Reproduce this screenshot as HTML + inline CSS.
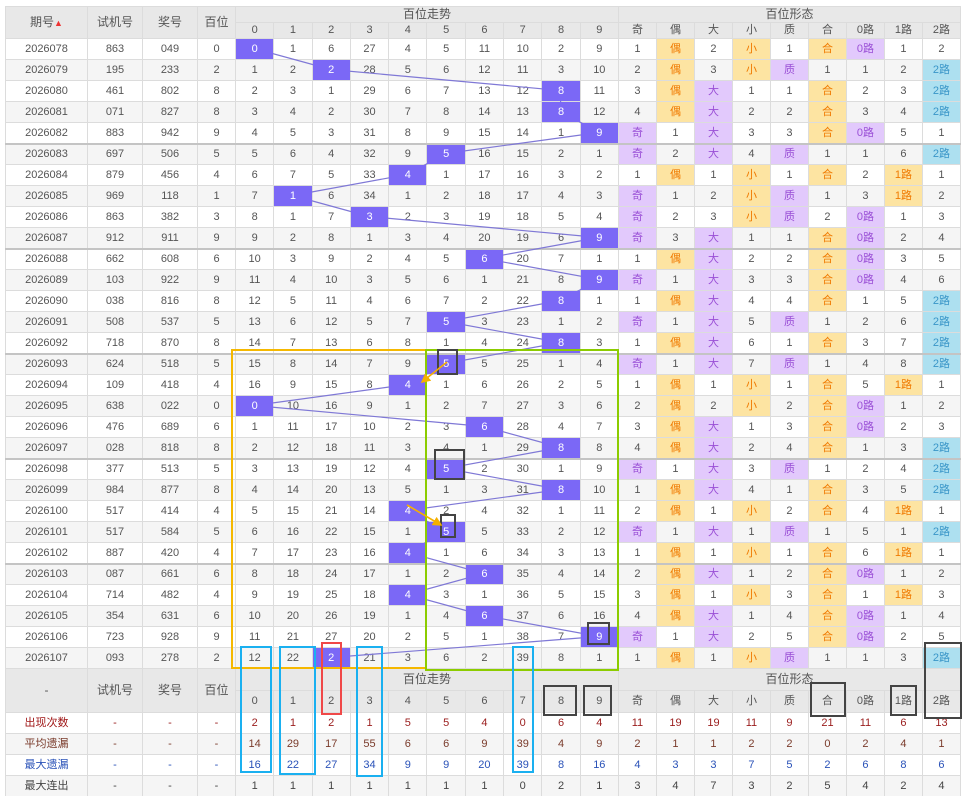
<!DOCTYPE html>
<html><head><meta charset="utf-8">
<style>
html,body{margin:0;padding:0;background:#fff;width:963px;height:796px;overflow:hidden;position:relative}
table{position:absolute;left:5px;top:6px;border-collapse:collapse;table-layout:fixed;font-family:"Liberation Sans","Noto Sans CJK SC",sans-serif;font-size:11px;color:#555}
td,th{border:1px solid #dcdcdc;text-align:center;padding:0;height:20px;line-height:20px;overflow:hidden;white-space:nowrap;font-weight:normal}
thead th{background:#e8e8e8;color:#555;font-size:12px}
thead tr.r1 th{height:15px;line-height:15px}
thead tr.r2 th{height:15px;line-height:15px;font-size:11px}
tbody tr:nth-child(even) td{background:#f5f5f5}
tbody tr:nth-child(odd) td{background:#fff}
tr.g td{border-top:2px solid #c4c4c4;height:19px;line-height:19px}
td.h{background:#7b68f6 !important;color:#fff;position:relative;z-index:2}
td.p{background:#e2c9fc !important;color:#9a4fd6}
td.y{background:#fde4a2 !important;color:#f07a00}
td.b{background:#ade0f0 !important;color:#3a96c8}
tfoot th{background:#e8e8e8;color:#555;font-size:12px}
tfoot tr.f1 th{height:21px;line-height:21px;border-top:1px solid #c4c4c4}
tfoot tr.f2 th{height:21px;line-height:21px;font-size:11px}
tfoot td{background:#fff}
tfoot tr.s2 td,tfoot tr.s4 td{background:#f5f5f5}
tr.s1 td{color:#9a1c1c}
tr.s2 td{color:#7a3b2b}
tr.s3 td{color:#2a52b8}
tr.s4 td{color:#444}
tr.s1 td:first-child{color:#a01818}
svg{position:absolute;left:0;top:0;pointer-events:none}
</style></head><body>
<svg width="963" height="796" style="z-index:1">
<polyline fill="none" stroke="#7f78d6" stroke-width="1.2" points="254,48.5 330.8,69.5 560.6,90.5 560.6,111.5 599,132.5 445.7,153.5 407.4,174.5 292.5,195.5 369,216.5 599,237.5 484,258.5 599,279.5 560.6,300.5 445.7,321.5 560.6,342.5 445.7,363.5 407.4,384.5 254,405.5 484,426.5 560.6,447.5 445.7,468.5 560.6,489.5 407.4,510.5 445.7,531.5 407.4,552.5 484,573.5 407.4,594.5 484,615.5 599,636.5 330.8,657.5"/>
</svg>
<table>
<colgroup><col style="width:82px"><col style="width:55px"><col style="width:55px"><col style="width:38px">
<col style="width:38.3px"><col style="width:38.3px"><col style="width:38.3px"><col style="width:38.3px"><col style="width:38.3px"><col style="width:38.3px"><col style="width:38.3px"><col style="width:38.3px"><col style="width:38.3px"><col style="width:38.3px">
<col style="width:38px"><col style="width:38px"><col style="width:38px"><col style="width:38px"><col style="width:38px"><col style="width:38px"><col style="width:38px"><col style="width:38px"><col style="width:38px"></colgroup>
<thead>
<tr class="r1"><th rowspan="2">期号<span style="color:#e33;font-size:9px">▲</span></th><th rowspan="2">试机号</th><th rowspan="2">奖号</th><th rowspan="2">百位</th><th colspan="10">百位走势</th><th colspan="9">百位形态</th></tr>
<tr class="r2"><th>0</th><th>1</th><th>2</th><th>3</th><th>4</th><th>5</th><th>6</th><th>7</th><th>8</th><th>9</th><th>奇</th><th>偶</th><th>大</th><th>小</th><th>质</th><th>合</th><th>0路</th><th>1路</th><th>2路</th></tr>
</thead>
<tbody>
<tr><td>2026078</td><td>863</td><td>049</td><td>0</td><td class="h">0</td><td>1</td><td>6</td><td>27</td><td>4</td><td>5</td><td>11</td><td>10</td><td>2</td><td>9</td><td>1</td><td class="y">偶</td><td>2</td><td class="y">小</td><td>1</td><td class="y">合</td><td class="p">0路</td><td>1</td><td>2</td></tr>
<tr><td>2026079</td><td>195</td><td>233</td><td>2</td><td>1</td><td>2</td><td class="h">2</td><td>28</td><td>5</td><td>6</td><td>12</td><td>11</td><td>3</td><td>10</td><td>2</td><td class="y">偶</td><td>3</td><td class="y">小</td><td class="p">质</td><td>1</td><td>1</td><td>2</td><td class="b">2路</td></tr>
<tr><td>2026080</td><td>461</td><td>802</td><td>8</td><td>2</td><td>3</td><td>1</td><td>29</td><td>6</td><td>7</td><td>13</td><td>12</td><td class="h">8</td><td>11</td><td>3</td><td class="y">偶</td><td class="p">大</td><td>1</td><td>1</td><td class="y">合</td><td>2</td><td>3</td><td class="b">2路</td></tr>
<tr><td>2026081</td><td>071</td><td>827</td><td>8</td><td>3</td><td>4</td><td>2</td><td>30</td><td>7</td><td>8</td><td>14</td><td>13</td><td class="h">8</td><td>12</td><td>4</td><td class="y">偶</td><td class="p">大</td><td>2</td><td>2</td><td class="y">合</td><td>3</td><td>4</td><td class="b">2路</td></tr>
<tr><td>2026082</td><td>883</td><td>942</td><td>9</td><td>4</td><td>5</td><td>3</td><td>31</td><td>8</td><td>9</td><td>15</td><td>14</td><td>1</td><td class="h">9</td><td class="p">奇</td><td>1</td><td class="p">大</td><td>3</td><td>3</td><td class="y">合</td><td class="p">0路</td><td>5</td><td>1</td></tr>
<tr class="g"><td>2026083</td><td>697</td><td>506</td><td>5</td><td>5</td><td>6</td><td>4</td><td>32</td><td>9</td><td class="h">5</td><td>16</td><td>15</td><td>2</td><td>1</td><td class="p">奇</td><td>2</td><td class="p">大</td><td>4</td><td class="p">质</td><td>1</td><td>1</td><td>6</td><td class="b">2路</td></tr>
<tr><td>2026084</td><td>879</td><td>456</td><td>4</td><td>6</td><td>7</td><td>5</td><td>33</td><td class="h">4</td><td>1</td><td>17</td><td>16</td><td>3</td><td>2</td><td>1</td><td class="y">偶</td><td>1</td><td class="y">小</td><td>1</td><td class="y">合</td><td>2</td><td class="y">1路</td><td>1</td></tr>
<tr><td>2026085</td><td>969</td><td>118</td><td>1</td><td>7</td><td class="h">1</td><td>6</td><td>34</td><td>1</td><td>2</td><td>18</td><td>17</td><td>4</td><td>3</td><td class="p">奇</td><td>1</td><td>2</td><td class="y">小</td><td class="p">质</td><td>1</td><td>3</td><td class="y">1路</td><td>2</td></tr>
<tr><td>2026086</td><td>863</td><td>382</td><td>3</td><td>8</td><td>1</td><td>7</td><td class="h">3</td><td>2</td><td>3</td><td>19</td><td>18</td><td>5</td><td>4</td><td class="p">奇</td><td>2</td><td>3</td><td class="y">小</td><td class="p">质</td><td>2</td><td class="p">0路</td><td>1</td><td>3</td></tr>
<tr><td>2026087</td><td>912</td><td>911</td><td>9</td><td>9</td><td>2</td><td>8</td><td>1</td><td>3</td><td>4</td><td>20</td><td>19</td><td>6</td><td class="h">9</td><td class="p">奇</td><td>3</td><td class="p">大</td><td>1</td><td>1</td><td class="y">合</td><td class="p">0路</td><td>2</td><td>4</td></tr>
<tr class="g"><td>2026088</td><td>662</td><td>608</td><td>6</td><td>10</td><td>3</td><td>9</td><td>2</td><td>4</td><td>5</td><td class="h">6</td><td>20</td><td>7</td><td>1</td><td>1</td><td class="y">偶</td><td class="p">大</td><td>2</td><td>2</td><td class="y">合</td><td class="p">0路</td><td>3</td><td>5</td></tr>
<tr><td>2026089</td><td>103</td><td>922</td><td>9</td><td>11</td><td>4</td><td>10</td><td>3</td><td>5</td><td>6</td><td>1</td><td>21</td><td>8</td><td class="h">9</td><td class="p">奇</td><td>1</td><td class="p">大</td><td>3</td><td>3</td><td class="y">合</td><td class="p">0路</td><td>4</td><td>6</td></tr>
<tr><td>2026090</td><td>038</td><td>816</td><td>8</td><td>12</td><td>5</td><td>11</td><td>4</td><td>6</td><td>7</td><td>2</td><td>22</td><td class="h">8</td><td>1</td><td>1</td><td class="y">偶</td><td class="p">大</td><td>4</td><td>4</td><td class="y">合</td><td>1</td><td>5</td><td class="b">2路</td></tr>
<tr><td>2026091</td><td>508</td><td>537</td><td>5</td><td>13</td><td>6</td><td>12</td><td>5</td><td>7</td><td class="h">5</td><td>3</td><td>23</td><td>1</td><td>2</td><td class="p">奇</td><td>1</td><td class="p">大</td><td>5</td><td class="p">质</td><td>1</td><td>2</td><td>6</td><td class="b">2路</td></tr>
<tr><td>2026092</td><td>718</td><td>870</td><td>8</td><td>14</td><td>7</td><td>13</td><td>6</td><td>8</td><td>1</td><td>4</td><td>24</td><td class="h">8</td><td>3</td><td>1</td><td class="y">偶</td><td class="p">大</td><td>6</td><td>1</td><td class="y">合</td><td>3</td><td>7</td><td class="b">2路</td></tr>
<tr class="g"><td>2026093</td><td>624</td><td>518</td><td>5</td><td>15</td><td>8</td><td>14</td><td>7</td><td>9</td><td class="h">5</td><td>5</td><td>25</td><td>1</td><td>4</td><td class="p">奇</td><td>1</td><td class="p">大</td><td>7</td><td class="p">质</td><td>1</td><td>4</td><td>8</td><td class="b">2路</td></tr>
<tr><td>2026094</td><td>109</td><td>418</td><td>4</td><td>16</td><td>9</td><td>15</td><td>8</td><td class="h">4</td><td>1</td><td>6</td><td>26</td><td>2</td><td>5</td><td>1</td><td class="y">偶</td><td>1</td><td class="y">小</td><td>1</td><td class="y">合</td><td>5</td><td class="y">1路</td><td>1</td></tr>
<tr><td>2026095</td><td>638</td><td>022</td><td>0</td><td class="h">0</td><td>10</td><td>16</td><td>9</td><td>1</td><td>2</td><td>7</td><td>27</td><td>3</td><td>6</td><td>2</td><td class="y">偶</td><td>2</td><td class="y">小</td><td>2</td><td class="y">合</td><td class="p">0路</td><td>1</td><td>2</td></tr>
<tr><td>2026096</td><td>476</td><td>689</td><td>6</td><td>1</td><td>11</td><td>17</td><td>10</td><td>2</td><td>3</td><td class="h">6</td><td>28</td><td>4</td><td>7</td><td>3</td><td class="y">偶</td><td class="p">大</td><td>1</td><td>3</td><td class="y">合</td><td class="p">0路</td><td>2</td><td>3</td></tr>
<tr><td>2026097</td><td>028</td><td>818</td><td>8</td><td>2</td><td>12</td><td>18</td><td>11</td><td>3</td><td>4</td><td>1</td><td>29</td><td class="h">8</td><td>8</td><td>4</td><td class="y">偶</td><td class="p">大</td><td>2</td><td>4</td><td class="y">合</td><td>1</td><td>3</td><td class="b">2路</td></tr>
<tr class="g"><td>2026098</td><td>377</td><td>513</td><td>5</td><td>3</td><td>13</td><td>19</td><td>12</td><td>4</td><td class="h">5</td><td>2</td><td>30</td><td>1</td><td>9</td><td class="p">奇</td><td>1</td><td class="p">大</td><td>3</td><td class="p">质</td><td>1</td><td>2</td><td>4</td><td class="b">2路</td></tr>
<tr><td>2026099</td><td>984</td><td>877</td><td>8</td><td>4</td><td>14</td><td>20</td><td>13</td><td>5</td><td>1</td><td>3</td><td>31</td><td class="h">8</td><td>10</td><td>1</td><td class="y">偶</td><td class="p">大</td><td>4</td><td>1</td><td class="y">合</td><td>3</td><td>5</td><td class="b">2路</td></tr>
<tr><td>2026100</td><td>517</td><td>414</td><td>4</td><td>5</td><td>15</td><td>21</td><td>14</td><td class="h">4</td><td>2</td><td>4</td><td>32</td><td>1</td><td>11</td><td>2</td><td class="y">偶</td><td>1</td><td class="y">小</td><td>2</td><td class="y">合</td><td>4</td><td class="y">1路</td><td>1</td></tr>
<tr><td>2026101</td><td>517</td><td>584</td><td>5</td><td>6</td><td>16</td><td>22</td><td>15</td><td>1</td><td class="h">5</td><td>5</td><td>33</td><td>2</td><td>12</td><td class="p">奇</td><td>1</td><td class="p">大</td><td>1</td><td class="p">质</td><td>1</td><td>5</td><td>1</td><td class="b">2路</td></tr>
<tr><td>2026102</td><td>887</td><td>420</td><td>4</td><td>7</td><td>17</td><td>23</td><td>16</td><td class="h">4</td><td>1</td><td>6</td><td>34</td><td>3</td><td>13</td><td>1</td><td class="y">偶</td><td>1</td><td class="y">小</td><td>1</td><td class="y">合</td><td>6</td><td class="y">1路</td><td>1</td></tr>
<tr class="g"><td>2026103</td><td>087</td><td>661</td><td>6</td><td>8</td><td>18</td><td>24</td><td>17</td><td>1</td><td>2</td><td class="h">6</td><td>35</td><td>4</td><td>14</td><td>2</td><td class="y">偶</td><td class="p">大</td><td>1</td><td>2</td><td class="y">合</td><td class="p">0路</td><td>1</td><td>2</td></tr>
<tr><td>2026104</td><td>714</td><td>482</td><td>4</td><td>9</td><td>19</td><td>25</td><td>18</td><td class="h">4</td><td>3</td><td>1</td><td>36</td><td>5</td><td>15</td><td>3</td><td class="y">偶</td><td>1</td><td class="y">小</td><td>3</td><td class="y">合</td><td>1</td><td class="y">1路</td><td>3</td></tr>
<tr><td>2026105</td><td>354</td><td>631</td><td>6</td><td>10</td><td>20</td><td>26</td><td>19</td><td>1</td><td>4</td><td class="h">6</td><td>37</td><td>6</td><td>16</td><td>4</td><td class="y">偶</td><td class="p">大</td><td>1</td><td>4</td><td class="y">合</td><td class="p">0路</td><td>1</td><td>4</td></tr>
<tr><td>2026106</td><td>723</td><td>928</td><td>9</td><td>11</td><td>21</td><td>27</td><td>20</td><td>2</td><td>5</td><td>1</td><td>38</td><td>7</td><td class="h">9</td><td class="p">奇</td><td>1</td><td class="p">大</td><td>2</td><td>5</td><td class="y">合</td><td class="p">0路</td><td>2</td><td>5</td></tr>
<tr><td>2026107</td><td>093</td><td>278</td><td>2</td><td>12</td><td>22</td><td class="h">2</td><td>21</td><td>3</td><td>6</td><td>2</td><td>39</td><td>8</td><td>1</td><td>1</td><td class="y">偶</td><td>1</td><td class="y">小</td><td class="p">质</td><td>1</td><td>1</td><td>3</td><td class="b">2路</td></tr>
</tbody>
<tfoot>
<tr class="f1"><th rowspan="2">-</th><th rowspan="2">试机号</th><th rowspan="2">奖号</th><th rowspan="2">百位</th><th colspan="10">百位走势</th><th colspan="9">百位形态</th></tr>
<tr class="f2"><th>0</th><th>1</th><th>2</th><th>3</th><th>4</th><th>5</th><th>6</th><th>7</th><th>8</th><th>9</th><th>奇</th><th>偶</th><th>大</th><th>小</th><th>质</th><th>合</th><th>0路</th><th>1路</th><th>2路</th></tr>
<tr class="s1"><td>出现次数</td><td>-</td><td>-</td><td>-</td><td>2</td><td>1</td><td>2</td><td>1</td><td>5</td><td>5</td><td>4</td><td>0</td><td>6</td><td>4</td><td>11</td><td>19</td><td>19</td><td>11</td><td>9</td><td>21</td><td>11</td><td>6</td><td>13</td></tr>
<tr class="s2"><td>平均遗漏</td><td>-</td><td>-</td><td>-</td><td>14</td><td>29</td><td>17</td><td>55</td><td>6</td><td>6</td><td>9</td><td>39</td><td>4</td><td>9</td><td>2</td><td>1</td><td>1</td><td>2</td><td>2</td><td>0</td><td>2</td><td>4</td><td>1</td></tr>
<tr class="s3"><td>最大遗漏</td><td>-</td><td>-</td><td>-</td><td>16</td><td>22</td><td>27</td><td>34</td><td>9</td><td>9</td><td>20</td><td>39</td><td>8</td><td>16</td><td>4</td><td>3</td><td>3</td><td>7</td><td>5</td><td>2</td><td>6</td><td>8</td><td>6</td></tr>
<tr class="s4"><td>最大连出</td><td>-</td><td>-</td><td>-</td><td>1</td><td>1</td><td>1</td><td>1</td><td>1</td><td>1</td><td>1</td><td>0</td><td>2</td><td>1</td><td>3</td><td>4</td><td>7</td><td>3</td><td>2</td><td>5</td><td>4</td><td>2</td><td>4</td></tr>
</tfoot>
</table>
<svg width="963" height="796" style="z-index:3">
<defs><marker id="ar" markerWidth="6" markerHeight="6" refX="5" refY="3" orient="auto"><path d="M0,0 L6,3 L0,6 z" fill="#f5b000"/></marker></defs>
<rect x="232" y="350" width="194" height="318" fill="none" stroke="#f5b800" stroke-width="2"/>
<rect x="426" y="350" width="192" height="320" fill="none" stroke="#8ccc00" stroke-width="2"/>
<g fill="none" stroke="#444" stroke-width="2">
<rect x="438" y="350" width="19" height="24"/>
<rect x="435" y="450" width="29" height="29"/>
<rect x="441" y="515" width="14" height="22"/>
<rect x="588" y="623" width="21" height="21"/>
<rect x="925" y="643" width="36" height="75"/>
<rect x="544" y="686" width="32" height="29"/>
<rect x="584" y="686" width="27" height="29"/>
<rect x="811" y="683" width="34" height="33"/>
<rect x="891" y="686" width="25" height="29"/>
</g>
<g fill="none" stroke="#1ab0f0" stroke-width="2">
<rect x="241" y="647" width="30" height="125"/>
<rect x="280" y="647" width="35" height="127"/>
<rect x="357" y="647" width="25" height="129"/>
<rect x="513" y="647" width="20" height="125"/>
</g>
<rect x="322" y="643" width="19" height="71" fill="none" stroke="#f04848" stroke-width="2"/>
<line x1="447" y1="362" x2="422" y2="382" stroke="#f5b000" stroke-width="1.6" marker-end="url(#ar)"/>
<line x1="407" y1="505" x2="441" y2="525" stroke="#f5b000" stroke-width="1.6" marker-end="url(#ar)"/>
</svg>
</body></html>
